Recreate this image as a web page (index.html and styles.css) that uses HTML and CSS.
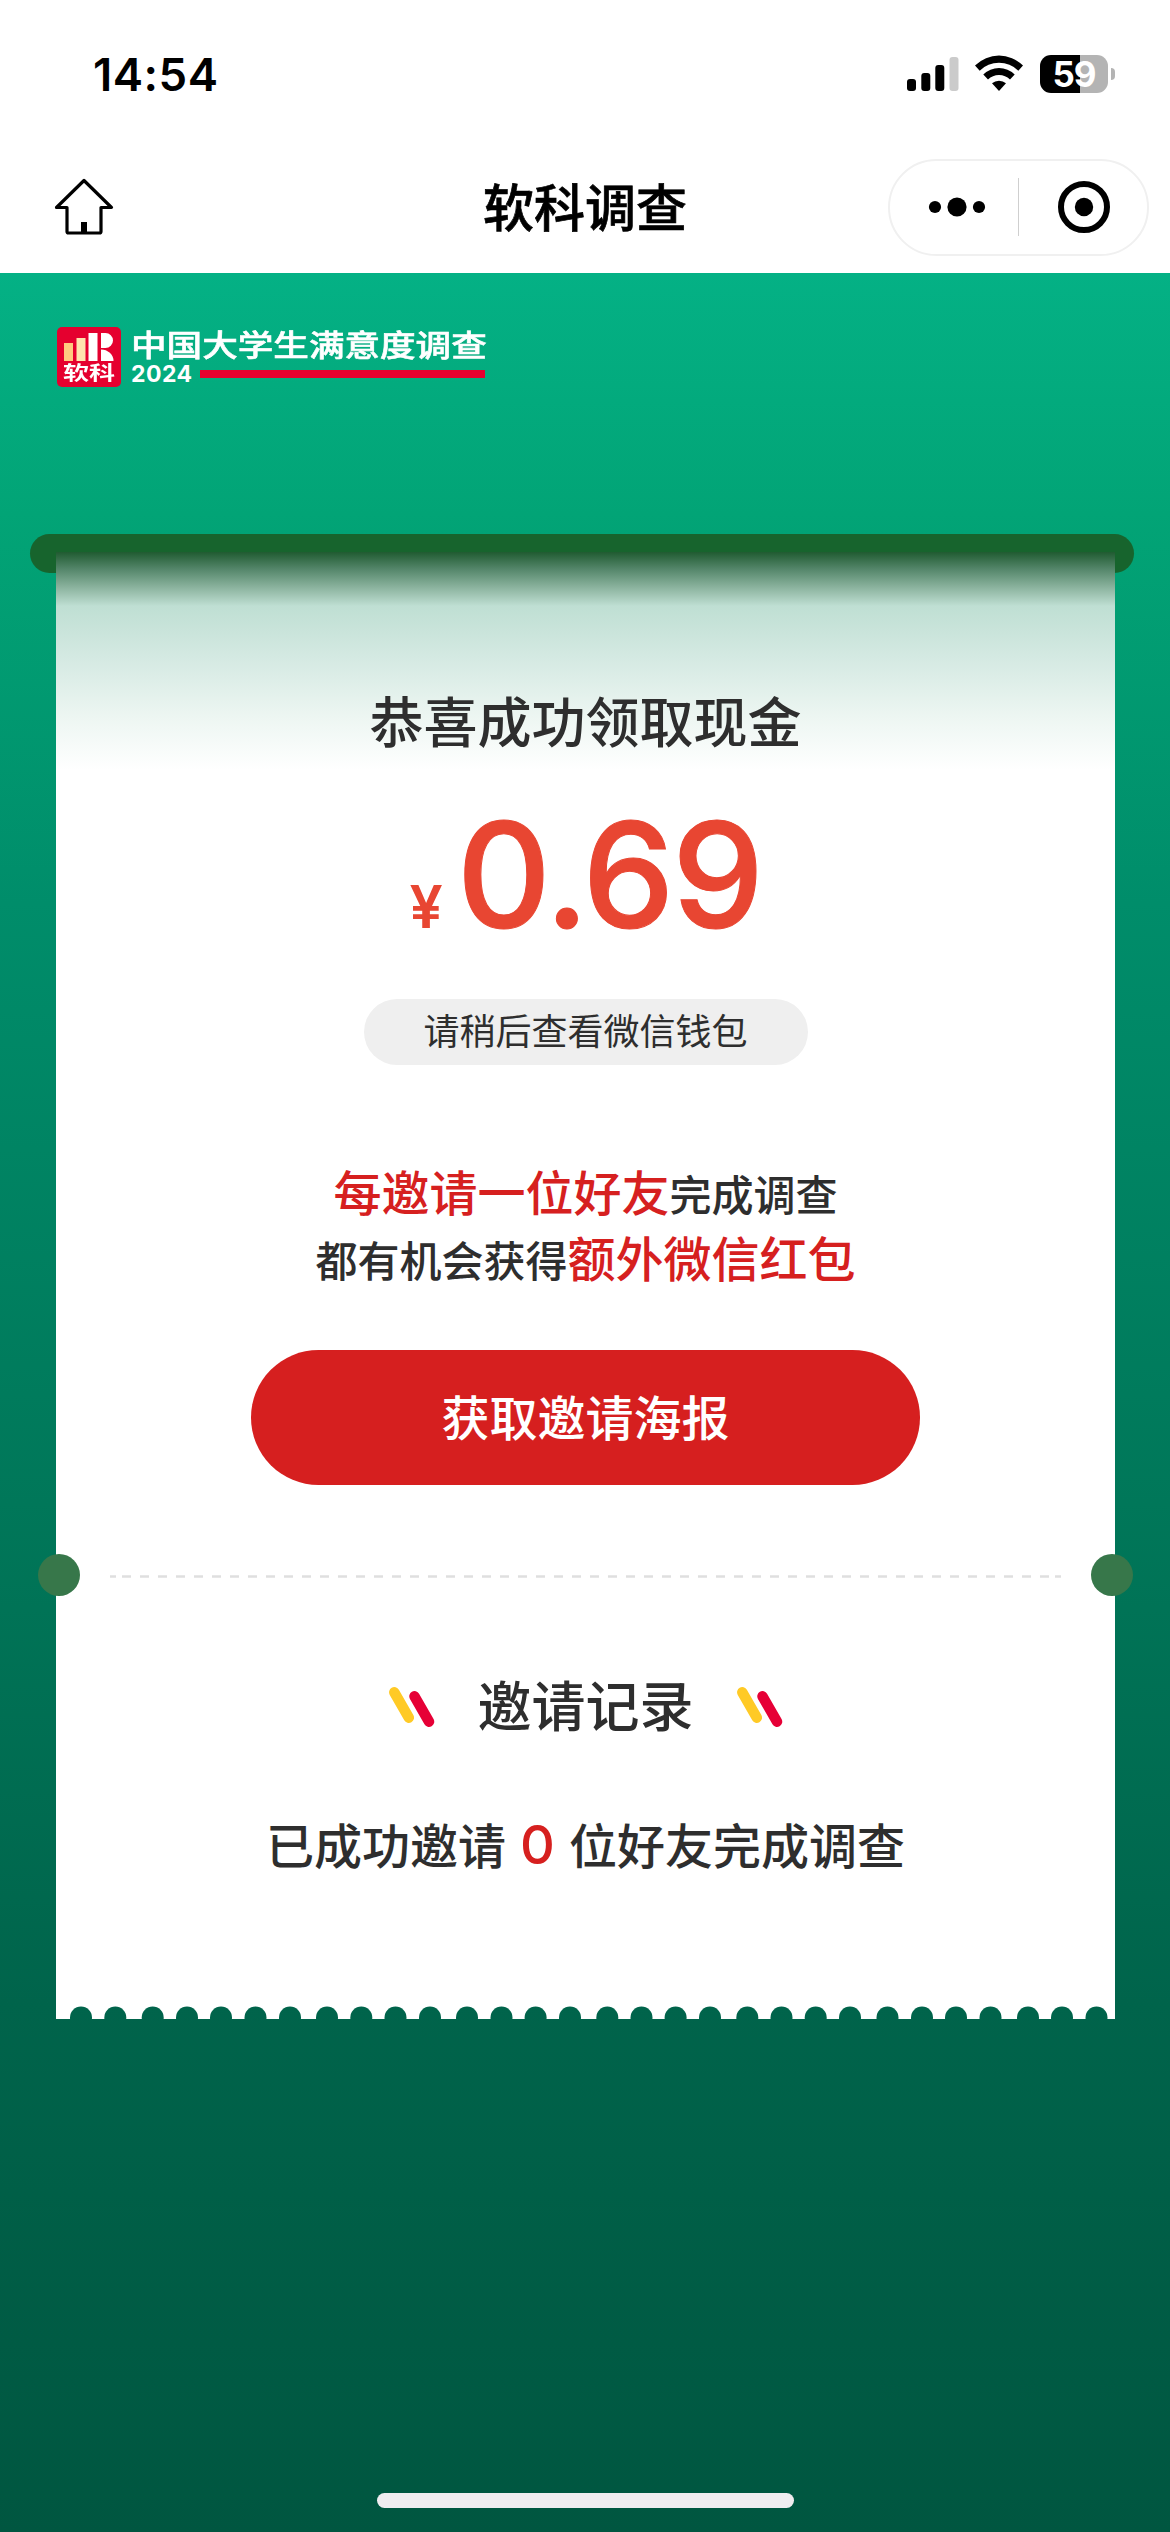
FILE: index.html
```html
<!DOCTYPE html>
<html lang="zh-CN">
<head>
<meta charset="utf-8">
<title>软科调查</title>
<link rel="stylesheet" href="styles.css">
</head>
<body>
<header class="top">
  <div class="status">
    <span class="time">14:54</span>
    <div class="indicators">
      <svg class="signal" width="52" height="38" viewBox="0 0 52 38"><rect y="24" width="9" height="12" rx="3"/><rect x="14.3" y="18" width="9" height="18" rx="3"/><rect x="28.3" y="10" width="9" height="26" rx="3"/><rect x="42.5" y="2" width="9" height="34" rx="3" fill="#cbcbcb"/></svg>
      <svg class="wifi" width="48" height="38" viewBox="0 0 48 38"><path d="M0 10.5A34 34 0 0 1 48 10.5L43.3 15.7A27.5 27.5 0 0 0 4.7 15.7Z"/><path d="M8.3 19.5A22.5 22.5 0 0 1 39.7 19.5L35 24.5A15.7 15.7 0 0 0 13 24.5Z"/><path d="M17 28.3A10.5 10.5 0 0 1 31 28.3L24 36Z"/></svg>
      <div class="battery"><span class="level">59</span></div>
      <i class="nub"></i>
    </div>
  </div>
  <nav class="nav">
    <svg class="home" width="60" height="58" viewBox="0 0 60 58" fill="none" stroke="#000" stroke-width="3.2" stroke-linejoin="round"><path d="M30 2.5L57.5 29.5H47V53.5Q47 55 45.500 55H14.500Q13 55 13 53.500V29.500H2.500Z"/><path d="M30 55V44" stroke-width="6"/></svg>
    <h1 class="nav-title">软科调查</h1>
    <div class="capsule">
      <svg width="48" height="24" viewBox="0 0 48 24"><circle cx="8" cy="12" r="6.100"/><circle cx="30" cy="12" r="9.600"/><circle cx="52" cy="12" r="6.100"/></svg>
      <i class="capsule-line"></i>
      <svg width="52" height="52" viewBox="0 0 52 52"><circle cx="26" cy="26" r="23" fill="none" stroke="#000" stroke-width="6"/><circle cx="26" cy="26" r="9.200"/></svg>
    </div>
  </nav>
</header>
<main class="page">
  <div class="brand">
    <div class="badge">
      <svg width="64" height="34" viewBox="0 0 64 34"><path fill="#ffca80" d="M7 16h9v18H7z"/><path fill="#ffe4ae" d="M19.500 11h9v23h-9z"/><path fill="#fff" d="M31.500 6h9v28h-9zM44 6h4.500a7.500 7.500 0 0 1 0 15H44zM44 22.500A12.500 11.500 0 0 1 56.500 34H44z"/></svg>
      <span class="badge-name">软科</span>
    </div>
    <div class="brand-text">
      <div class="brand-title">中国大学生满意度调查</div>
      <div class="brand-year"><span>2024</span><i></i></div>
    </div>
  </div>
  <div class="rod"></div>
  <section class="card">
    <h2 class="congrats">恭喜成功领取现金</h2>
    <div class="amount"><span class="yen">¥</span><span class="number">0.69</span></div>
    <div class="hint">请稍后查看微信钱包</div>
    <p class="invite"><b>每邀请一位好友</b>完成调查<br>都有机会获得<b>额外微信红包</b></p>
    <button class="poster">获取邀请海报</button>
    <div class="divider">
      <i class="hole"></i>
      <svg width="952" height="3" viewBox="0 0 952 3" stroke="#dfdfdf" stroke-width="2.500"><path d="M0 1.500H6M945 1.500H951"/><path d="M12 1.500H940" stroke-dasharray="9 9"/></svg>
      <i class="hole"></i>
    </div>
    <div class="record-head">
      <svg width="46" height="40" viewBox="0 0 46 40" stroke-width="10.500" stroke-linecap="round"><path stroke="#ffca26" d="M5.300 5.300L19.800 30.700"/><path stroke="#e60036" d="M25.500 9.300L40 34.700"/></svg>
      <h2>邀请记录</h2>
      <svg width="46" height="40" viewBox="0 0 46 40" stroke-width="10.500" stroke-linecap="round"><path stroke="#ffca26" d="M5.300 5.300L19.800 30.700"/><path stroke="#e60036" d="M25.500 9.300L40 34.700"/></svg>
    </div>
    <p class="record">已成功邀请<b>0</b>位好友完成调查</p>
  </section>
  <svg class="scallops" width="1059" height="13" viewBox="56 2006 1059 13">
    <mask id="teeth" maskUnits="userSpaceOnUse" x="56" y="2006" width="1059" height="13">
      <path fill="#fff" d="M56 2006h1059v13H56z"/>
      <g fill="#000"><circle cx="81" cy="2017.500" r="11"/><circle cx="115.300" cy="2017.500" r="11"/><circle cx="152.700" cy="2017.500" r="11"/><circle cx="187" cy="2017.500" r="11"/><circle cx="221" cy="2017.500" r="11"/><circle cx="255.500" cy="2017.500" r="11"/><circle cx="290" cy="2017.500" r="11"/><circle cx="327" cy="2017.500" r="11"/><circle cx="361.300" cy="2017.500" r="11"/><circle cx="395.500" cy="2017.500" r="11"/><circle cx="430" cy="2017.500" r="11"/><circle cx="467" cy="2017.500" r="11"/><circle cx="501.500" cy="2017.500" r="11"/><circle cx="535.600" cy="2017.500" r="11"/><circle cx="570" cy="2017.500" r="11"/><circle cx="607.300" cy="2017.500" r="11"/><circle cx="641.500" cy="2017.500" r="11"/><circle cx="675.600" cy="2017.500" r="11"/><circle cx="710" cy="2017.500" r="11"/><circle cx="747.300" cy="2017.500" r="11"/><circle cx="781.500" cy="2017.500" r="11"/><circle cx="815.700" cy="2017.500" r="11"/><circle cx="850" cy="2017.500" r="11"/><circle cx="887.500" cy="2017.500" r="11"/><circle cx="922" cy="2017.500" r="11"/><circle cx="956" cy="2017.500" r="11"/><circle cx="990.500" cy="2017.500" r="11"/><circle cx="1028" cy="2017.500" r="11"/><circle cx="1062" cy="2017.500" r="11"/><circle cx="1096.500" cy="2017.500" r="11"/></g>
    </mask>
    <path fill="#fff" mask="url(#teeth)" d="M56 2006h1059v13H56z"/>
  </svg>
  <div class="home-bar"></div>
</main>
</body>
</html>
```
FILE: styles.css
```css
* { box-sizing: border-box; margin: 0; padding: 0; }
body {
  width: 1170px;
  height: 2532px;
  display: flex;
  flex-direction: column;
  overflow: hidden;
  background: #fff;
  color: #2e2e2e;
  font-family: Inter, "Noto Sans CJK SC", sans-serif;
}
svg { display: block; flex: none; }
i { display: block; }

.top { height: 273px; }
.status {
  height: 148px;
  padding: 0 55px 0 93px;
  display: flex;
  justify-content: space-between;
  align-items: center;
}
.time { font-size: 45.5px; font-weight: 600; letter-spacing: .5px; color: #000; }
.indicators { display: flex; align-items: center; }
.wifi { margin: 0 17px 0 16px; }
.battery {
  width: 68px;
  height: 38px;
  border-radius: 11px;
  background: linear-gradient(90deg, #000 40px, #b4b4b4 40px);
  display: flex;
  align-items: center;
  justify-content: center;
}
.level { color: #fff; font-size: 35px; line-height: 38px; font-weight: 700; letter-spacing: -1px; }
.nub { width: 4px; height: 12px; margin-left: 3px; border-radius: 0 4px 4px 0; background: #b4b4b4; }

.nav {
  height: 118px;
  padding: 0 21px 0 54px;
  display: grid;
  grid-template-columns: 228px 1fr 261px;
  align-items: center;
}
.nav-title {
  text-align: center;
  padding-top: 3px;
  font-size: 51px;
  line-height: 60px;
  font-weight: 500;
  color: #000;
  -webkit-text-stroke: .7px #000;
}
.capsule {
  height: 97px;
  border: 2px solid #f0f0f0;
  border-radius: 49px;
  display: flex;
  align-items: center;
  padding: 0 37px 0 37px;
}
.capsule svg { overflow: visible; }
.capsule-line { flex: none; width: 1px; height: 58px; margin: 0 39px 0 43px; background: #cfcfcf; }

.page {
  flex: 1;
  display: flex;
  flex-direction: column;
  position: relative;
  background: linear-gradient(180deg, #04b185 0, #02a476 240px, #008d6a 630px, #007759 1230px, #00644b 1730px, #005640 2259px);
}
.brand { margin: 54px 0 0 57px; height: 60px; display: flex; gap: 10px; }
.badge { width: 64px; height: 60px; border-radius: 5px; background: #e5002f; text-align: center; }
.badge-name {
  display: block;
  font-size: 26px;
  line-height: 24px;
  font-weight: 700;
  color: #fff;
  transform: scaleY(.75);
}
.brand-text { color: #fff; width: 354px; }
.brand-title {
  height: 38px;
  line-height: 38px;
  font-size: 35.6px;
  font-weight: 500;
  -webkit-text-stroke: .7px #fff;
  white-space: nowrap;
  transform: scaleY(.84);
}
.brand-year { height: 20px; display: flex; align-items: center; gap: 7px; }
.brand-year span { font-size: 23px; font-weight: 700; width: 62px; line-height: 20px; margin-top: -2px; letter-spacing: .5px; }
.brand-year i { height: 8px; flex: 1; background: #e5002f; margin-top: -2px; }

.rod { margin: 147px 0 0 30px; width: 1104px; height: 39px; border-radius: 20px; background: #17642d; flex: none; }
.card {
  position: relative;
  margin: -21px 0 0 56px;
  width: 1059px;
  height: 1454px;
  flex: none;
  display: flex;
  flex-direction: column;
  align-items: center;
  background: linear-gradient(180deg, #205b31 0, #54866a 17px, #8ab29d 35px, #bfdfd3 54px, #d4e9e2 105px, #edf6f2 165px, #fff 218px);
}
.congrats { margin-top: 132px; line-height: 80px; font-size: 54px; font-weight: 500; }
.amount { margin-top: 36px; height: 151px; display: flex; align-items: baseline; gap: 14px; color: #e84632; line-height: 150px; }
.yen { font-size: 59px; font-weight: 600; }
.number { font-size: 146px; font-weight: 500; letter-spacing: -2.5px; -webkit-text-stroke: 1px #e84632; }
.hint {
  margin-top: 48px;
  width: 444px;
  height: 66px;
  border-radius: 33px;
  background: #efefef;
  text-align: center;
  font-size: 36px;
  line-height: 66px;
}
.invite { margin-top: 98px; text-align: center; font-size: 42px; line-height: 66px; font-weight: 500; }
.invite b { font-size: 48px; font-weight: 500; line-height: 60px; color: #d6201f; }
.poster {
  margin-top: 55px;
  width: 669px;
  height: 135px;
  padding-bottom: 6px;
  border: 0;
  border-radius: 68px;
  background: #d61f1f;
  color: #fff;
  font: 500 48px/120px "Noto Sans CJK SC", sans-serif;
}
.divider { margin-top: 69px; width: 1095px; height: 42px; display: flex; justify-content: space-between; align-items: center; }
.hole { width: 42px; height: 42px; border-radius: 50%; background: #37774a; }
.divider svg { margin-top: 3px; }
.record-head { margin-top: 71px; height: 80px; display: flex; align-items: center; gap: 43px; }
.record-head h2 { font-size: 54px; font-weight: 500; line-height: 80px; padding-top: 2px; }
.record { margin-top: 58px; height: 80px; line-height: 80px; font-size: 48px; font-weight: 500; }
.record b { color: #d6201f; font-size: 54px; font-weight: 500; margin: 0 14px; }
.scallops { margin-left: 56px; }
.home-bar { position: absolute; left: 377px; bottom: 24px; width: 417px; height: 15px; border-radius: 8px; background: #f0edf0; }
```
